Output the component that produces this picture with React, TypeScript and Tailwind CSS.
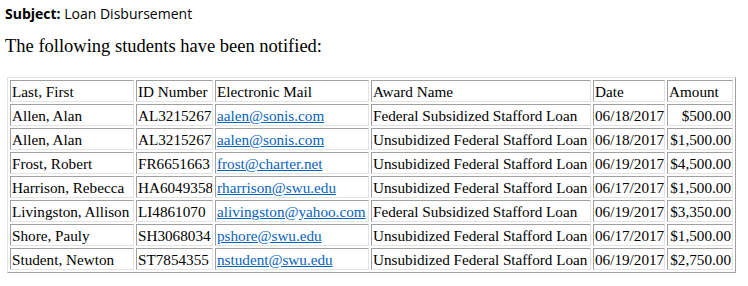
import React from 'react';

const rows = [
  { name: 'Allen, Alan', id: 'AL3215267', email: 'aalen@sonis.com', award: 'Federal Subsidized Stafford Loan', date: '06/18/2017', amount: '$500.00' },
  { name: 'Allen, Alan', id: 'AL3215267', email: 'aalen@sonis.com', award: 'Unsubidized Federal Stafford Loan', date: '06/18/2017', amount: '$1,500.00' },
  { name: 'Frost, Robert', id: 'FR6651663', email: 'frost@charter.net', award: 'Unsubidized Federal Stafford Loan', date: '06/19/2017', amount: '$4,500.00' },
  { name: 'Harrison, Rebecca', id: 'HA6049358', email: 'rharrison@swu.edu', award: 'Unsubidized Federal Stafford Loan', date: '06/17/2017', amount: '$1,500.00' },
  { name: 'Livingston, Allison', id: 'LI4861070', email: 'alivingston@yahoo.com', award: 'Federal Subsidized Stafford Loan', date: '06/19/2017', amount: '$3,350.00' },
  { name: 'Shore, Pauly', id: 'SH3068034', email: 'pshore@swu.edu', award: 'Unsubidized Federal Stafford Loan', date: '06/17/2017', amount: '$1,500.00' },
  { name: 'Student, Newton', id: 'ST7854355', email: 'nstudent@swu.edu', award: 'Unsubidized Federal Stafford Loan', date: '06/19/2017', amount: '$2,750.00' },
];

const cell = 'border border-t-[#a0a0a0] border-l-[#a0a0a0] border-r-[#e3e3e3] border-b-[#e3e3e3] px-px pt-[2px] pb-0 align-top whitespace-nowrap overflow-hidden';

export default function App() {
  return (
    <div className="w-[748px] h-[286px] bg-white text-black overflow-hidden">
      <div className="pl-[5px] pt-[4px] text-[14px] leading-[19px] font-['Open_Sans','Noto_Sans',sans-serif]">
        <span className="font-bold">Subject:</span> Loan Disbursement
      </div>
      <p className="pl-[5px] mt-[13px] text-[18.5px] leading-[21px] font-['Liberation_Serif',serif]">
        The following students have been notified:
      </p>
      <div className="pl-[7px] mt-[20px]">
        <table className="table-fixed w-[729px] border-separate border-spacing-[2px] border border-t-[#e3e3e3] border-l-[#e3e3e3] border-r-[#a0a0a0] border-b-[#a0a0a0] text-[15.2px] leading-[18px] font-['Liberation_Serif',serif]">
          <colgroup>
            <col className="w-[124px]" />
            <col className="w-[77px]" />
            <col className="w-[154px]" />
            <col className="w-[220px]" />
            <col className="w-[72px]" />
            <col className="w-[66px]" />
          </colgroup>
          <tbody>
            <tr>
              <td className={cell}>Last, First</td>
              <td className={cell}>ID Number</td>
              <td className={cell}>Electronic Mail</td>
              <td className={cell}>Award Name</td>
              <td className={cell}>Date</td>
              <td className={cell}>Amount</td>
            </tr>
            {rows.map((r, i) => (
              <tr key={i}>
                <td className={cell}>{r.name}</td>
                <td className={cell}>{r.id}</td>
                <td className={cell}>
                  <a href="#" className="text-[#0563c1] underline">{r.email}</a>
                </td>
                <td className={cell}>{r.award}</td>
                <td className={cell}>{r.date}</td>
                <td className={`${cell} text-right`}>{r.amount}</td>
              </tr>
            ))}
          </tbody>
        </table>
      </div>
    </div>
  );
}
